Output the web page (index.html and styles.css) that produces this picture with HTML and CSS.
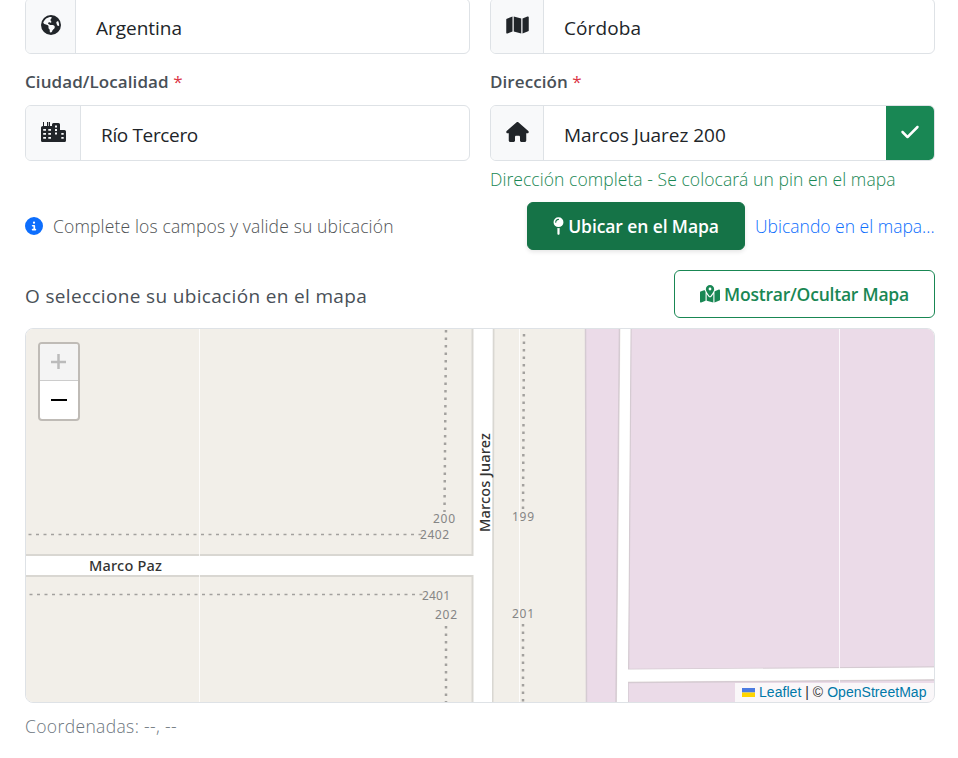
FILE: index.html
```html
<!DOCTYPE html>
<html lang="es">
<head>
<meta charset="utf-8">
<title>Ubicación</title>
<link rel="stylesheet" href="styles.css">
</head>
<body>
<main class="page">
  <div class="fields">
    <div class="group">
      <span class="addon addon-globe"><svg width="20" height="20" viewBox="0 0 512 512"><path d="M57.700 193l9.400 16.400c8.300 14.500 21.900 25.200 38 29.800L163 255.700c17.200 4.900 29 20.600 29 38.500v39.900c0 11 6.200 21 16 25.900s16 14.900 16 25.900v39c0 15.600 14.900 26.900 29.900 22.600c16.100-4.600 28.600-17.500 32.700-33.800l2.800-11.200c4.200-16.900 15.200-31.400 30.300-40l8.100-4.600c15-8.500 24.200-24.500 24.200-41.700v-8.300c0-12.700-5.100-24.900-14.100-33.900l-3.900-3.900c-9-9-21.200-14.100-33.900-14.100H257c-11.100 0-22.100-2.900-31.800-8.400l-34.500-19.700c-4.300-2.500-7.600-6.500-9.200-11.200c-3.200-9.600 1.100-20 10.200-24.500l5.900-3c6.600-3.300 14.300-3.900 21.300-1.500l23.200 7.700c8.200 2.700 17.200-.4 21.900-7.500c4.700-7 4.200-16.300-1.200-22.800l-13.600-16.300c-10-12-9.900-29.500 .3-41.300l15.700-18.300c8.800-10.300 10.200-25 3.500-36.700l-2.400-4.200c-3.500-.2-6.900-.3-10.400-.3C163.100 48 84.400 108.900 57.700 193zM464 256c0-36.800-9.600-71.400-26.400-101.500L412 164.800c-15.700 6.300-23.800 23.800-18.500 39.800l16.900 50.700c3.500 10.400 12 18.300 22.600 20.900l29.100 7.300c1.200-9 1.800-18.200 1.800-27.500zM0 256a256 256 0 1 1 512 0A256 256 0 1 1 0 256z"/></svg></span>
      <span class="value">Argentina</span>
    </div>
    <div class="group">
      <span class="addon addon-wide"><svg width="23" height="20" viewBox="0 0 576 512"><path d="M384 476.100L192 421.200V35.900L384 90.800V476.100zm32-1.200V88.400L543.100 37.500c15.800-6.300 32.900 5.300 32.900 22.300V394.600c0 9.800-6 18.600-15.100 22.300L416 474.800zM15.100 95.100L160 37.200V423.600L32.900 474.500C17.100 480.800 0 469.200 0 452.200V117.400c0-9.800 6-18.600 15.100-22.300z"/></svg></span>
      <span class="value value-cba">Córdoba</span>
    </div>
    <label class="label">Ciudad/Localidad <span class="req">*</span></label>
    <label class="label label-dir">Dirección <span class="req">*</span></label>
    <div class="group">
      <span class="addon addon-city"><svg width="25" height="20" viewBox="0 0 25 20"><path fill-rule="evenodd" d="M2 0h1v4h3V0h1.300v4H8V0h1v4h2V2.500q0-1.500 1.500-1.500h5q1.500 0 1.500 1.500V8h4.500Q25 8 25 9.500v9q0 1.500-1.500 1.500h-22Q0 20 0 18.500v-13Q0 4 2 4zM2.200 7v1.800H5V7zM7.300 7v1.800H10V7zM2.200 11v1.800H5V11zM7.300 11v1.800H10V11zM2.200 15v1.800H5V15zM7.300 15v1.800H10V15zM14 3.500v2h2v-2zM14 7v2h2V7zM14 10.500v2h2v-2zM20.300 11v1.800h2.400V11zM20.300 15v1.800h2.400V15z"/></svg></span>
      <span class="value value-city">Río Tercero</span>
    </div>
    <div class="group">
      <span class="addon addon-wide"><svg width="23" height="20" viewBox="0 0 576 512"><path d="M575.800 255.500c0 18-15 32.100-32 32.100h-32l.7 160.200c0 2.700-.2 5.400-.5 8.100V472c0 22.100-17.900 40-40 40H456c-1.100 0-2.200 0-3.300-.1c-1.400 .1-2.800 .1-4.200 .1H416 392c-22.100 0-40-17.900-40-40V448 384c0-17.700-14.300-32-32-32H256c-17.700 0-32 14.300-32 32v64 24c0 22.100-17.900 40-40 40H160 128.100c-1.500 0-3-.1-4.500-.2c-1.200 .1-2.400 .2-3.600 .2H104c-22.100 0-40-17.900-40-40V360c0-.9 0-1.900 .1-2.800V287.600H32c-18 0-32-14-32-32.100c0-9 3-17 10-24L266.400 8c7-7 15-8 22-8s15 2 21 7L564.800 231.500c8 7 12 15 11 24z"/></svg></span>
      <span class="value">Marcos Juarez 200</span>
      <span class="valid"><svg width="18" height="20" viewBox="0 0 448 512"><path d="M438.600 105.400c12.500 12.500 12.500 32.800 0 45.300l-256 256c-12.500 12.500-32.800 12.500-45.300 0l-128-128c-12.500-12.500-12.500-32.800 0-45.300s32.800-12.500 45.300 0L160 338.700 393.400 105.400c12.500-12.500 32.800-12.500 45.300 0z"/></svg></span>
    </div>
    <div class="feedback">Dirección completa - Se colocará un pin en el mapa</div>
  </div>

  <div class="row row-locate">
    <div class="hint"><svg class="info" width="18" height="18" viewBox="0 0 512 512"><path d="M256 512A256 256 0 1 0 256 0a256 256 0 1 0 0 512zM216 336h24V272H216c-13.300 0-24-10.700-24-24s10.700-24 24-24h48c13.300 0 24 10.700 24 24v88h8c13.300 0 24 10.700 24 24s-10.700 24-24 24H216c-13.300 0-24-10.700-24-24s10.700-24 24-24zm40-208a32 32 0 1 1 0 64 32 32 0 1 1 0-64z"/></svg><span class="hint-text">Complete los campos y valide su ubicación</span></div>
    <div class="locate">
      <button class="btn btn-solid"><svg width="11" height="18" viewBox="0 0 320 512"><path d="M16 144a144 144 0 1 1 288 0A144 144 0 1 1 16 144zM160 80c8.800 0 16-7.200 16-16s-7.200-16-16-16c-53 0-96 43-96 96c0 8.800 7.200 16 16 16s16-7.200 16-16c0-35.300 28.700-64 64-64zM128 480V317.100c10.400 1.900 21.100 2.900 32 2.900s21.600-1 32-2.900V480c0 17.700-14.300 32-32 32s-32-14.300-32-32z"/></svg><span>Ubicar en el Mapa</span></button>
      <span class="status">Ubicando en el mapa...</span>
    </div>
  </div>

  <div class="row row-map">
    <h2 class="title">O seleccione su ubicación en el mapa</h2>
    <button class="btn btn-outline"><svg width="20" height="18" viewBox="0 0 576 512"><path d="M408 120c0 54.600-73.100 151.900-105.200 192c-7.700 9.600-22 9.600-29.600 0C241.100 271.900 168 174.600 168 120C168 53.700 221.700 0 288 0s120 53.700 120 120zm8 80.400c3.500-6.900 6.700-13.800 9.600-20.600c.5-1.200 1-2.500 1.500-3.700l116-46.400C558.900 123.400 576 135 576 152V422.800c0 9.800-6 18.600-15.100 22.300L416 503V200.400zM137.600 138.300c2.400 14.100 7.200 28.300 12.800 41.500c2.900 6.800 6.100 13.700 9.600 20.600V451.800L32.900 502.700C17.100 509 0 497.400 0 480.400V209.600c0-9.800 6-18.600 15.100-22.300l122.600-49zM327.800 332c13.900-17.400 35.700-45.700 56.200-77V504.300L192 449.400V255c20.500 31.300 42.300 59.600 56.200 77c20.500 25.600 59.100 25.600 79.600 0zM288 152a40 40 0 1 0 0-80 40 40 0 1 0 0 80z"/></svg><span>Mostrar/Ocultar Mapa</span></button>
  </div>

  <div class="map">
    <svg class="tiles" width="908" height="373" viewBox="26 329 908 373">
      <rect x="26" y="329" width="908" height="373" fill="#f2efe9"/>
      <path class="factory" d="M585.500 326H619.500L616 705H586.500Z"/>
      <path class="factory" d="M631 326H937V667L628.500 669.500Z"/>
      <path class="factory" d="M628 682.500L937 680V705H628Z"/>
      <path class="casing" d="M472.500 326V555H24V576H472.500V705H492.500L493.500 326Z"/>
      <path class="street" d="M474 326V556.500H24V574.500H474V705H492L492.500 326Z"/>
      <path class="street" d="M620.500 326H630.500L628 669.500L937 667.500V679L628 681.500V705H617Z"/>
      <g class="dots">
        <path d="M446 330L444.500 512"/><path d="M446 626V702"/>
        <path d="M524 334L523 510"/><path d="M523 624V702"/>
      </g>
      <g class="dashes"><path d="M28.500 534.500H423"/><path d="M29.500 594.500H425"/></g>
      <g class="seam"><path d="M199.500 329V702M519.500 329V702M839.500 329V702"/></g>
      <g class="numbers">
        <text x="433" y="523" textLength="22">200</text>
        <text x="420" y="539" textLength="29">2402</text>
        <text x="422" y="600" textLength="28">2401</text>
        <text x="435" y="619" textLength="22">202</text>
        <text x="512" y="521" textLength="22">199</text>
        <text x="512" y="618" textLength="22">201</text>
      </g>
      <g class="names">
        <text x="89" y="571" textLength="73">Marco Paz</text>
        <text transform="translate(490 532) rotate(-90)" textLength="99">Marcos Juarez</text>
      </g>
    </svg>
    <div class="zoom"><span class="zoom-in"><svg width="16" height="16"><path d="M0 8H15M7.500 0V15"/></svg></span><span class="zoom-out"><svg width="16" height="16"><path d="M0 8H16"/></svg></span></div>
    <div class="credit"><svg width="13" height="9"><path fill="#4c7be1" d="M0 0h13v4.500H0z"/><path fill="#ffd500" d="M0 4.500h13V9H0z"/></svg><span><a>Leaflet</a> | © <a>OpenStreetMap</a></span></div>
  </div>
  <div class="coords">Coordenadas: --, --</div>
</main>
</body>
</html>
```
FILE: styles.css
```css
* { box-sizing: border-box; }
body { margin: 0; background: #fff; color: #212529; font-family: "Open Sans", "Noto Sans", sans-serif; overflow: hidden; }
.page { width: 958px; height: 758px; padding: 0 23px 0 25px; overflow: hidden; }
svg { display: block; flex: none; fill: currentColor; }
.fields { display: grid; grid-template-columns: 445px 445px; column-gap: 20px; margin-top: -2px; }
.group { display: flex; height: 56px; border: 1px solid #dee2e6; border-radius: 6px; overflow: hidden; }
.addon { display: flex; align-items: center; padding: 0 15px 2px; background: #f8f9fa; border-right: 1px solid #dee2e6; }
.addon-globe { width: 50px; }
.addon-city { width: 55px; }
.addon-wide { width: 53px; }
.value { flex: 1; padding-left: 20px; font-size: 19px; line-height: 59px; letter-spacing: -.02px; white-space: nowrap; }
.value-city { letter-spacing: -.35px; }
.value-cba { letter-spacing: .1px; }
.valid { width: 48px; display: flex; align-items: center; justify-content: center; padding-bottom: 2px; background: #198754; color: #fff; }
.label { height: 51px; line-height: 56px; font-size: 17px; font-weight: 600; letter-spacing: .08px; color: #495057; white-space: nowrap; }
.req { color: #dc3545; font-weight: 400; }
.feedback { grid-column: 2; height: 41px; line-height: 37px; font-size: 17.500px; font-weight: 300; letter-spacing: .06px; color: #198754; white-space: nowrap; }
.row { display: flex; justify-content: space-between; align-items: center; height: 48px; white-space: nowrap; }
.hint, .locate { display: flex; align-items: center; gap: 10px; font-size: 17.500px; font-weight: 300; }
.hint { color: #4f5355; }
.hint-text { letter-spacing: .15px; }
.info, .status { color: #0d6efd; }
.btn { display: flex; align-items: center; justify-content: center; gap: 4px; height: 48px; padding: 0; border: 1px solid #198754; border-radius: 6px; font: 600 17.500px "Open Sans", sans-serif; }
.btn-solid { width: 218px; background: #157347; border-color: #157347; color: #fff; letter-spacing: -.1px; box-shadow: 0 2px 4px rgba(0,0,0,.1); }
.btn-outline { width: 261px; background: #fff; color: #198754; letter-spacing: -.22px; }
.status { width: 180px; }
.row-map { margin-top: 20px; }
.title { margin: 0; padding-top: 4px; font-size: 19px; font-weight: 500; letter-spacing: .34px; color: #495057; }
.map { position: relative; width: 910px; height: 375px; margin-top: 10px; border: 1px solid #dee2e6; border-radius: 8px; overflow: hidden; }
.factory { fill: #ebdbe8; stroke: #d5cbd2; stroke-width: 1.500px; }
.casing { fill: #fff; stroke: #d9d7d2; stroke-width: 2px; }
.street { fill: #fff; }
.dots path, .dashes path { fill: none; stroke: #a3a19e; stroke-width: 2.500px; stroke-dasharray: 2.500px 5px; }
.dashes path { stroke-width: 1.700px; stroke-dasharray: 3px 4.500px; }
.seam path { fill: none; stroke: #fff; stroke-width: 1px; opacity: .8; }
.numbers { font: 12px "Noto Sans", sans-serif; fill: #858585; }
.names { font: 500 14.500px "Noto Sans", sans-serif; fill: #333; }
.numbers text, .names text { length-adjust: spacingAndGlyphs; }
.zoom { position: absolute; left: 12px; top: 13px; width: 42px; height: 79px; border: 2px solid #bfbbb6; border-radius: 4px; overflow: hidden; background: #fff; }
.zoom span { display: flex; align-items: center; justify-content: center; height: 37px; }
.zoom path { fill: none; stroke: currentColor; stroke-width: 2px; }
.zoom .zoom-in { background: #f4f4f4; color: #bbb; border-bottom: 1px solid #ccc; }
.zoom-in path { stroke-width: 2.500px; }
.zoom .zoom-out { color: #000; }
.credit { position: absolute; right: 0; bottom: 0; display: flex; align-items: center; gap: 4px; width: 199px; height: 19px; padding: 0 0 1px 7px; background: #faf7f9; color: #333; font: 14px "Liberation Sans", sans-serif; letter-spacing: .04px; white-space: nowrap; }
.credit a { color: #0078a8; }
.coords { line-height: 47px; font-size: 17.500px; font-weight: 300; letter-spacing: .36px; color: #6c757d; }
```
